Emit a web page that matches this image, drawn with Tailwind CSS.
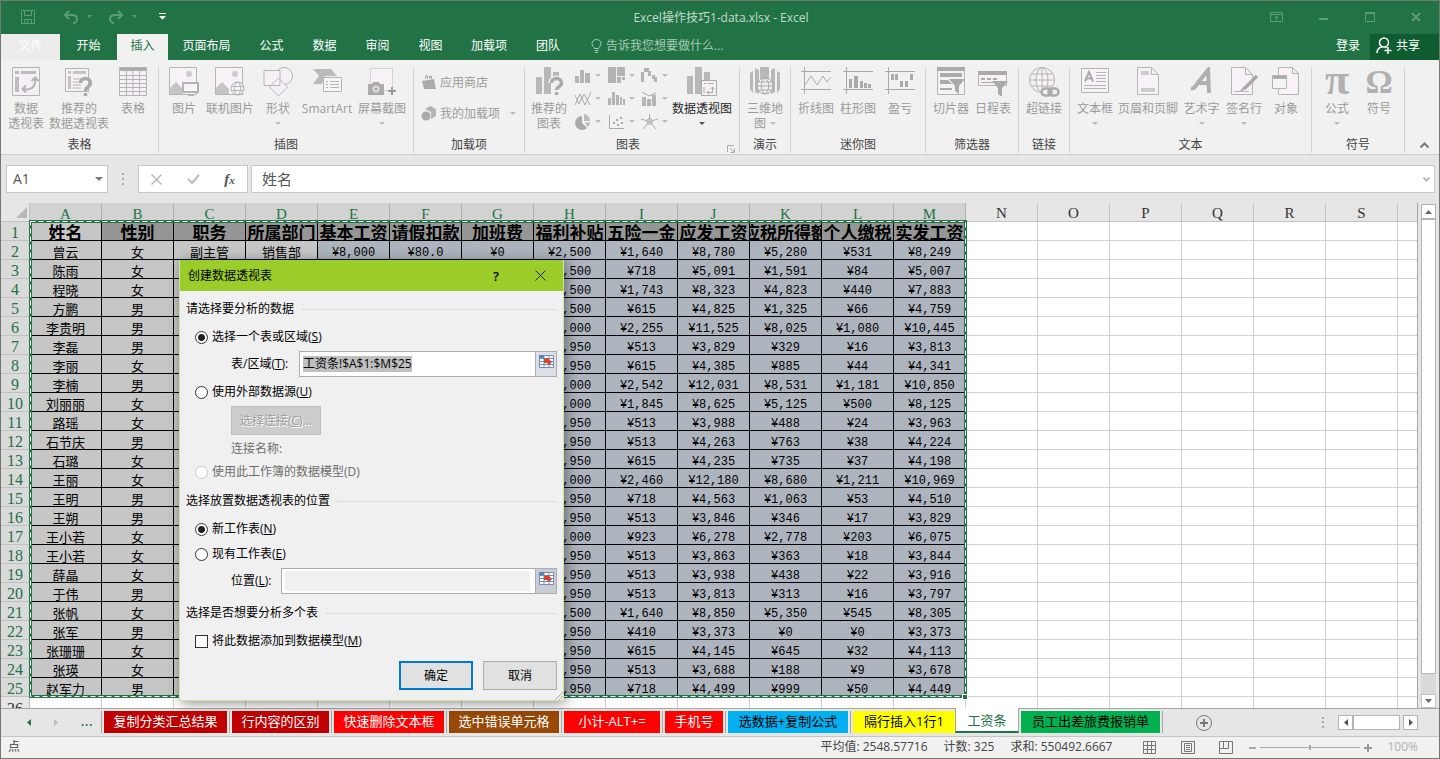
<!DOCTYPE html>
<html lang="zh-CN">
<head>
<meta charset="utf-8">
<title>Excel操作技巧1-data.xlsx - Excel</title>
<script src="https://cdn.jsdelivr.net/npm/@tailwindcss/browser@4"></script>
</head>
<body class="h-screen overflow-hidden font-['Open_Sans','Noto_Sans_CJK_SC',sans-serif] text-xs text-[#444]">
<div class="relative flex h-screen flex-col overflow-hidden border border-[#6f7a74] bg-[#e6e6e6]">

  <!-- Title bar -->
  <header class="flex h-[33px] shrink-0 items-center bg-[#217346] pb-[2px] text-[#5d9c7b]">
    <div class="flex flex-1 items-center pl-5">
      <button aria-label="保存"><svg class="size-[14px]" viewBox="0 0 14 14" fill="none" stroke="currentColor"><path d="M.5.5h13v13H.5zM3.500.5v5h7v-5M3.500 13.500v-4h7v4M6.500 10v3"/></svg></button>
      <button aria-label="撤消" class="ml-7 flex items-center gap-2"><svg class="h-[14px] w-[16px]" viewBox="0 0 16 14" fill="none" stroke="currentColor" stroke-width="2"><path d="M6 1L2 5l4 4M2 5h7c3 0 5 1.500 5 4s-2 4-4 4"/></svg><svg class="h-[3px] w-[5px]" viewBox="0 0 5 3" fill="currentColor"><path d="M0 0h5L2.500 3z"/></svg></button>
      <button aria-label="恢复" class="ml-4 flex items-center gap-2"><svg class="h-[14px] w-[16px]" viewBox="0 0 16 14" fill="none" stroke="currentColor" stroke-width="2"><path d="M10 1l4 4-4 4M14 5H7C4 5 2 6.500 2 9s2 4 4 4"/></svg><svg class="h-[3px] w-[5px]" viewBox="0 0 5 3" fill="currentColor"><path d="M0 0h5L2.500 3z"/></svg></button>
      <button aria-label="自定义快速访问工具栏" class="ml-[22px] text-white"><svg class="h-[7px] w-[7px]" viewBox="0 0 7 7" fill="currentColor"><path d="M0 0h7v1H0zM0 3h7L3.500 6.500z"/></svg></button>
    </div>
    <h1 class="pt-[2px] font-normal text-[#c4dbce]">Excel操作技巧1-data.xlsx - Excel</h1>
    <div class="flex flex-1 items-center justify-end gap-9 pr-[18px]">
      <button aria-label="功能区显示选项"><svg class="h-[10px] w-[13px]" viewBox="0 0 13 10" fill="none" stroke="currentColor"><path d="M.5.5h12v9H.5zM.5 2.500h12M6.500 8.500V4M4.500 6l2-2 2 2"/></svg></button>
      <button aria-label="最小化"><svg class="h-[10px] w-[10px]" viewBox="0 0 10 10" fill="currentColor"><path d="M0 6h9v2H0z"/></svg></button>
      <button aria-label="最大化"><svg class="h-[10px] w-[10px]" viewBox="0 0 10 10" fill="none" stroke="currentColor"><path d="M.5.5h9v9h-9zM0 1.500h10"/></svg></button>
      <button aria-label="关闭"><svg class="h-[10px] w-[10px]" viewBox="0 0 10 10" fill="none" stroke="currentColor" stroke-width="2"><path d="M1 1l8 8M9 1L1 9"/></svg></button>
    </div>
  </header>

  <!-- Ribbon tabs -->
  <nav class="flex h-[26px] shrink-0 items-stretch bg-[#217346] leading-[18px] text-white [&>button]:pb-[3px]">
    <button class="w-[59px] bg-[#ececec] text-white">文件</button>
    <button class="w-[57px]">开始</button>
    <button class="w-[51px] bg-[#f1f1f1] text-[#217346]">插入</button>
    <button class="w-[77px]">页面布局</button>
    <button class="w-[53px]">公式</button>
    <button class="w-[53px]">数据</button>
    <button class="w-[53px]">审阅</button>
    <button class="w-[53px]">视图</button>
    <button class="w-[64px]">加载项</button>
    <button class="w-[54px]">团队</button>
    <label class="ml-4 flex flex-1 items-center gap-1 pb-[2px] text-[#a9cbb8]">
      <svg class="h-[14px] w-[11px]" viewBox="0 0 11 14" fill="none" stroke="currentColor"><path d="M3.500 9.500C3.500 8 1 7 1 4.500a4.500 4 0 0 1 9 0C10 7 7.500 8 7.500 9.500zM3.500 11.500h4M4 13.500h3"/></svg>
      <input class="w-[160px] placeholder-[#a9cbb8] outline-none" aria-label="告诉我您想要做什么" placeholder="告诉我您想要做什么...">
    </label>
    <button class="w-11">登录</button>
    <button class="flex w-[69px] items-center gap-[3px] bg-[#0e5c2f] pl-[6px]"><svg class="size-[17px]" viewBox="0 0 17 17" fill="none" stroke="currentColor" stroke-width="1.500"><circle cx="8" cy="5.500" r="4.500"/><path d="M1 16c0-3.500 2-5.500 5-6M9 10l1.500 1M8.500 13.500h7M12 10v7"/></svg>共享</button>
  </nav>

  <!-- Ribbon -->
  <section class="flex h-[95px] shrink-0 border-b border-[#cdcdcd] bg-[#f1f1f1] leading-[15px] whitespace-nowrap text-[#9b9b9b]">
    <!-- 表格 -->
    <div class="flex w-[158px] shrink-0 flex-col pt-[7px]">
      <div class="flex h-[70px] border-r border-[#d4d4d4] pl-[1px]">
        <button class="flex w-12 flex-col items-center"><svg class="mb-[5px] h-[29px] w-[28px]" viewBox="0 0 28 29" fill="none" stroke="#b4b4b4"><path fill="#f6f0f6" d="M.5.5h27v28H.5z"/><path d="M3 4h4v3H3zM9 4h15v3H9zM3 10h4v15H3z" fill="#bcbcbc" stroke="none"/><path stroke-width="2" d="M11 22c9 2 13-3 12-11M19.500 14l3.500-3.500 3.500 3.500M14 18.500L10.500 22l3.500 3.500"/></svg>数据<br>透视表</button>
        <button class="flex w-[58px] flex-col items-center"><svg class="mb-[5px] h-[29px] w-[28px]" viewBox="0 0 28 29" fill="none" stroke="#b4b4b4"><path fill="#f6f0f6" d="M.5 1.500h23v23H.5z"/><path d="M3 4h3v3H3zM8 4h13v3H8zM3 9h3v13H3z" fill="#c4c4c4" stroke="none"/><path d="M8 12h10M8 15h8M8 18h8M8 21h8"/><path stroke-width="3.500" stroke="#aaa" d="M15.500 16c0-6 10-6 10 0 0 4-5 3.500-5 8M20.500 26v3"/></svg>推荐的<br>数据透视表</button>
        <button class="flex w-[50px] flex-col items-center"><svg class="mb-[5px] h-[29px] w-[28px]" viewBox="0 0 28 29" fill="none" stroke="#b4b4b4"><path fill="#f6f0f6" d="M.5 3.500h27v25H.5z"/><path fill="#aaa" d="M.5.5h27v3H.5z"/><path d="M.5 8.500h27M.5 12.500h27M.5 16.500h27M.5 20.500h27M.5 24.500h27M7.500 3v25M14 3v25M20.500 3v25"/></svg>表格</button>
      </div>
      <div class="h-[16px] border-r border-[#d4d4d4] text-center text-[#444]">表格</div>
    </div>
    <!-- 插图 -->
    <div class="flex w-[255px] shrink-0 flex-col pt-[7px]">
      <div class="flex h-[70px] border-r border-[#d4d4d4] pl-[3px]">
        <button class="flex w-11 flex-col items-center"><svg class="mb-[5px] h-[29px] w-[30px]" viewBox="0 0 30 29" fill="none" stroke="#b4b4b4"><path fill="#f8f2f8" d="M.5.5h27v27H.5z"/><circle cx="20" cy="7" r="3" fill="#ccc" stroke="none"/><path stroke="none" fill="#c4c4c4" d="M1 27V21l6-6 7 7v5z"/><path stroke-width="2" fill="#f5f5f5" d="M14 16h15v9H14z"/><path stroke-width="2" d="M19 28.500h6"/></svg>图片</button>
        <button class="flex w-12 flex-col items-center"><svg class="mb-[5px] h-[29px] w-[30px]" viewBox="0 0 30 29" fill="none" stroke="#b4b4b4"><path fill="#f8f2f8" d="M.5.500h27v27H.5z"/><circle cx="20" cy="7" r="3" fill="#ccc" stroke="none"/><path stroke="none" fill="#c4c4c4" d="M1 27V21l6-6 7 7v5z"/><circle cx="22.500" cy="21.500" r="6.500" fill="#f5f5f5"/><ellipse cx="22.500" cy="21.500" rx="3" ry="6.500"/><path d="M16 19.500h13M16 23.500h13"/></svg>联机图片</button>
        <button class="flex w-12 flex-col items-center"><svg class="mb-[5px] h-[29px] w-[30px]" viewBox="0 0 30 29" fill="#f6f0f6" stroke="#b4b4b4"><circle cx="21" cy="9" r="8.500"/><path d="M1 3.500h16v15H1zM15.500 11l9 9-9 9-9-9z"/></svg>形状<svg class="mt-[6px] h-[3px] w-[6px]" viewBox="0 0 6 3" fill="#bbb"><path d="M0 0h6L3 3z"/></svg></button>
        <button class="flex w-[50px] flex-col items-center"><svg class="mb-[5px] h-[29px] w-[32px]" viewBox="0 0 32 29" fill="none" stroke="#b4b4b4"><path fill="#bababa" stroke="none" d="M2 2h18l6 7H14l-3 8H2l6-8z"/><path fill="#f8f4f8" d="M12.500 10.500h18v14h-18z"/><path d="M15 14.500h2M19 14.500h9M15 17.500h2M19 17.500h9M15 20.500h2M19 20.500h9"/></svg>SmartArt</button>
        <button class="flex w-[60px] flex-col items-center"><svg class="mb-[5px] h-[29px] w-[28px]" viewBox="0 0 28 29" fill="none" stroke="#b4b4b4"><path fill="#f8f2f8" stroke-dasharray="1 1" d="M2.500 1.500h22v22h-22z"/><path fill="#aaa" stroke="none" d="M0 17h4l1-2h6l1 2h4v11H0z"/><circle cx="8" cy="22" r="3.500" fill="#ddd" stroke="none"/><circle cx="8" cy="22" r="1.500" fill="#aaa" stroke="none"/><path stroke="#999" stroke-width="2" d="M20 24h8M24 20v8"/></svg>屏幕截图<svg class="mt-[6px] h-[3px] w-[6px]" viewBox="0 0 6 3" fill="#bbb"><path d="M0 0h6L3 3z"/></svg></button>
      </div>
      <div class="h-[16px] border-r border-[#d4d4d4] text-center text-[#444]">插图</div>
    </div>
    <!-- 加载项 -->
    <div class="flex w-[111px] shrink-0 flex-col pt-[7px]">
      <div class="flex h-[70px] flex-col gap-[15px] border-r border-[#d4d4d4] pt-[7px] pl-[7px]">
        <button class="flex items-center gap-[3px]"><svg class="h-[16px] w-[16px]" viewBox="0 0 16 16" fill="#aaa"><path d="M1 7l12-2 2 10H3zM4 6V2l3-1v4H6V2zM8 5V2h3v3h-1V3z"/></svg>应用商店</button>
        <button class="flex items-center gap-[3px]"><svg class="h-[16px] w-[16px]" viewBox="0 0 16 16" fill="#aaa"><circle cx="5" cy="11" r="4.500"/><path d="M4 4l5-3 6 3v7l-5 3V7z" fill="#b4b4b4"/></svg>我的加载项<svg class="ml-[7px] h-[3px] w-[6px]" viewBox="0 0 6 3" fill="#bbb"><path d="M0 0h6L3 3z"/></svg></button>
      </div>
      <div class="h-[16px] border-r border-[#d4d4d4] text-center text-[#444]">加载项</div>
    </div>
    <!-- 图表 -->
    <div class="flex w-[215px] shrink-0 flex-col pt-[7px]">
      <div class="flex h-[70px] border-r border-[#d4d4d4]">
        <button class="flex w-12 flex-col items-center"><svg class="mb-[5px] ml-[2px] h-[29px] w-[28px]" viewBox="0 0 28 29" fill="#b8b8b8"><path d="M0 10h6v17H0zM8 0h7v27H8zM17 5h6v8h-6z"/><path fill="none" stroke="#f1f1f1" stroke-width="6" d="M15.500 16c0-6 10-6 10 0 0 4-5 3.500-5 8"/><path fill="none" stroke="#aaa" stroke-width="3.500" d="M15.500 16c0-6 10-6 10 0 0 4-5 3.500-5 7M20.500 25v3"/></svg>推荐的<br>图表</button>
        <div class="grid grid-cols-3 content-start gap-x-[6px] gap-y-[6px] pl-[2px]">
          <button class="flex items-center gap-1" aria-label="柱形图"><svg class="size-[16px]" viewBox="0 0 16 16" fill="#b4b4b4"><path d="M0 8h4v7H0zM5 2h4v13H5zM10 5h5v10h-5z"/></svg><svg class="h-[3px] w-[6px]" viewBox="0 0 6 3" fill="#bbb"><path d="M0 0h6L3 3z"/></svg></button>
          <button class="flex items-center gap-1" aria-label="层次结构图"><svg class="size-[17px]" viewBox="0 0 17 17" fill="#b4b4b4"><path d="M0 0h8v16H0zM9 0h8v9H9zM9 10h4v6H9zM14 10h3v3h-3z"/></svg><svg class="h-[3px] w-[6px]" viewBox="0 0 6 3" fill="#bbb"><path d="M0 0h6L3 3z"/></svg></button>
          <button class="flex items-center gap-1" aria-label="瀑布图"><svg class="size-[17px]" viewBox="0 0 17 17" fill="#b4b4b4"><path d="M0 5h3v10H0zM3 1h5v4H3zM7 4h3v5H7zM11 8h3v4h-3zM13 10h3v5h-3z"/></svg><svg class="h-[3px] w-[6px]" viewBox="0 0 6 3" fill="#bbb"><path d="M0 0h6L3 3z"/></svg></button>
          <button class="flex items-center gap-1" aria-label="折线图"><svg class="size-[16px]" viewBox="0 0 16 16" fill="none" stroke="#aaa"><path d="M0 14L5 3l5 11 6-13M0 4l4 9 5-10 6 11"/></svg><svg class="h-[3px] w-[6px]" viewBox="0 0 6 3" fill="#bbb"><path d="M0 0h6L3 3z"/></svg></button>
          <button class="flex items-center gap-1" aria-label="统计图"><svg class="size-[17px]" viewBox="0 0 17 17" fill="#b4b4b4"><path d="M0 8h3v7H0zM4 2h3v13H4zM8 5h3v10H8zM12 7h2v8h-2zM15 9h2v6h-2z"/></svg><svg class="h-[3px] w-[6px]" viewBox="0 0 6 3" fill="#bbb"><path d="M0 0h6L3 3z"/></svg></button>
          <button class="flex items-center gap-1" aria-label="组合图"><svg class="size-[17px]" viewBox="0 0 17 17" fill="#b4b4b4"><path d="M1 7h4v9H1zM6 9h4v7H6zM11 5h4v11h-4z"/><path d="M1 2l7 4 7-3" stroke="#aaa" fill="none"/></svg><svg class="h-[3px] w-[6px]" viewBox="0 0 6 3" fill="#bbb"><path d="M0 0h6L3 3z"/></svg></button>
          <button class="flex items-center gap-1" aria-label="饼图"><svg class="size-[16px]" viewBox="0 0 16 16" fill="#aaa"><path d="M7 2v7l5 5a7 7 0 1 1-5-12z"/><path d="M9 0a7 7 0 0 1 6 7H9zM9.500 8.500H15a7 7 0 0 1-2 4.500z" fill="#bbb"/></svg><svg class="h-[3px] w-[6px]" viewBox="0 0 6 3" fill="#bbb"><path d="M0 0h6L3 3z"/></svg></button>
          <button class="flex items-center gap-1" aria-label="散点图"><svg class="size-[17px]" viewBox="0 0 17 17" fill="#aaa"><path d="M1 2h1v13h14v1H1zM5 9h2v2H5zM8 6h2v2H8zM9 11h2v2H9zM12 4h2v2h-2zM13 9h2v2h-2z"/></svg><svg class="h-[3px] w-[6px]" viewBox="0 0 6 3" fill="#bbb"><path d="M0 0h6L3 3z"/></svg></button>
          <button class="flex items-center gap-1" aria-label="雷达图"><svg class="size-[17px]" viewBox="0 0 17 17" fill="none" stroke="#aaa"><path d="M8.500 1v7.500M0 6l8.500 2.500L17 6M2 16l6.500-7.500L15 16M8.500 5l-3 2.500 1 3.500h4l1-3.500z"/></svg><svg class="h-[3px] w-[6px]" viewBox="0 0 6 3" fill="#bbb"><path d="M0 0h6L3 3z"/></svg></button>
        </div>
        <button class="ml-[3px] flex w-[62px] flex-col items-center text-[#262626]"><svg class="mb-[5px] h-[29px] w-[30px]" viewBox="0 0 30 29" fill="#b8b8b8"><path d="M0 9h6v18H0zM8 0h7v27H8zM17 5h6v8h-6z"/><path fill="#f6f0f0" stroke="#aaa" d="M14.500 13.500h15v15h-15z"/><path fill="none" stroke="#aaa" d="M17 16.500h2M21 16.500h6M17 20v6M20 25.500h5.500V20M23.500 22l2-2 2 2M22 23.500l-2 2 2 2"/></svg>数据透视图<svg class="mt-[6px] h-[3px] w-[6px]" viewBox="0 0 6 3" fill="#555"><path d="M0 0h6L3 3z"/></svg></button>
      </div>
      <div class="flex h-[16px] border-r border-[#d4d4d4] text-[#444]"><span class="flex-1 pr-0 pl-1 text-center">图表</span><button class="self-end pr-1" aria-label="图表对话框"><svg class="size-[8px]" viewBox="0 0 8 8" fill="none" stroke="#aaa"><path d="M.5 7V.5H7M3 3l4 4M7.500 3.500v4h-4"/></svg></button></div>
    </div>
    <!-- 演示 -->
    <div class="flex w-[51px] shrink-0 flex-col pt-[7px]">
      <div class="flex h-[70px] justify-center border-r border-[#d4d4d4]">
        <button class="flex w-12 flex-col items-center"><svg class="mb-[5px] h-[29px] w-[30px]" viewBox="0 0 30 29" fill="#b8b8b8"><path d="M0 6l3-2v22l-3-4zM5 1l4 2v24l-4-2zM10 0h9v12h-9zM21 3l4-2v24l-4 2zM27 4l3 2v16l-3 4z"/><circle cx="15" cy="19" r="8" fill="#f1f1f1" stroke="#aaa"/><path fill="none" stroke="#aaa" d="M7 19h16M8.500 15h13M8.500 23h13M15 11c-5 4-5 12 0 16 5-4 5-12 0-16"/></svg>三维地<span class="flex items-center gap-1">图<svg class="h-[3px] w-[6px]" viewBox="0 0 6 3" fill="#bbb"><path d="M0 0h6L3 3z"/></svg></span></button>
      </div>
      <div class="h-[16px] border-r border-[#d4d4d4] text-center text-[#444]">演示</div>
    </div>
    <!-- 迷你图 -->
    <div class="flex w-[135px] shrink-0 flex-col pt-[7px]">
      <div class="flex h-[70px] justify-center border-r border-[#d4d4d4]">
        <button class="flex w-[42px] flex-col items-center"><svg class="mb-[5px] h-[29px] w-[30px]" viewBox="0 0 30 29" fill="none" stroke="#aaa"><path d="M0 4.500h30M0 22.500h30M3.500 0v27"/><path d="M4 18l6-9 6 9 6-9 4 6 4-5"/></svg>折线图</button>
        <button class="flex w-[42px] flex-col items-center"><svg class="mb-[5px] h-[29px] w-[30px]" viewBox="0 0 30 29" fill="none" stroke="#aaa"><path d="M0 4.500h30M0 22.500h30M3.500 0v27"/><path stroke="none" fill="#aaa" d="M6 12h3v9H6zM11 9h4v12h-4zM17 14h3v7h-3zM21 16h3v5h-3zM25 17h3v4h-3z"/></svg>柱形图</button>
        <button class="flex w-[42px] flex-col items-center"><svg class="mb-[5px] h-[29px] w-[30px]" viewBox="0 0 30 29" fill="none" stroke="#aaa"><path d="M0 4.500h30M0 22.500h30M3.500 0v27"/><path stroke="none" fill="#aaa" d="M6 7h3v6H6zM10 7h3v6h-3zM15 14h3v6h-3zM20 14h3v6h-3zM25 7h3v6h-3z"/></svg>盈亏</button>
      </div>
      <div class="h-[16px] border-r border-[#d4d4d4] text-center text-[#444]">迷你图</div>
    </div>
    <!-- 筛选器 -->
    <div class="flex w-[93px] shrink-0 flex-col pt-[7px]">
      <div class="flex h-[70px] justify-center border-r border-[#d4d4d4]">
        <button class="flex w-[42px] flex-col items-center"><svg class="mb-[5px] h-[29px] w-[28px]" viewBox="0 0 28 29" fill="#aaa"><path fill="#f5f1f5" stroke="#b4b4b4" d="M.5.500h27v27H.5z"/><path d="M0 0h28v4H0zM3 6h22v4H3zM3 13h8l4 4H3zM3 21h12v2H3zM12 12h16l-6 7v8l-4-3v-5z"/></svg>切片器</button>
        <button class="flex w-[42px] flex-col items-center"><svg class="mb-[5px] h-[29px] w-[30px]" viewBox="0 0 30 29" fill="#aaa"><path fill="#f5f1f5" stroke="#b4b4b4" d="M.5 4.500h28v14H.5z"/><path d="M0 4h29v4H0zM3 11h4v2H3zM9 11h4v2H9zM15 11h4v2h-4zM3 15h12v1H3zM14 14h16l-6 7v9l-4-3v-6z"/></svg>日程表</button>
      </div>
      <div class="h-[16px] border-r border-[#d4d4d4] text-center text-[#444]">筛选器</div>
    </div>
    <!-- 链接 -->
    <div class="flex w-[51px] shrink-0 flex-col pt-[7px]">
      <div class="flex h-[70px] justify-center border-r border-[#d4d4d4]">
        <button class="flex w-12 flex-col items-center"><svg class="mb-[4px] h-[30px] w-[31px]" viewBox="0 0 31 30" fill="none" stroke="#b4b4b4"><circle cx="13" cy="13" r="12.500" fill="#f5f1f5"/><ellipse cx="13" cy="13" rx="6" ry="12.500"/><path d="M.5 13h25M13 .5v25M2.500 7h21M2.500 19h21"/><path stroke="#f1f1f1" stroke-width="5" d="M12 25h18"/><rect x="12.500" y="21.500" width="10" height="7" rx="3.500" stroke="#aaa" stroke-width="2.500"/><rect x="19.500" y="21.500" width="10" height="7" rx="3.500" stroke="#aaa" stroke-width="2.500"/></svg>超链接</button>
      </div>
      <div class="h-[16px] border-r border-[#d4d4d4] text-center text-[#444]">链接</div>
    </div>
    <!-- 文本 -->
    <div class="flex w-[242px] shrink-0 flex-col pt-[7px]">
      <div class="flex h-[70px] justify-center border-r border-[#d4d4d4]">
        <button class="flex w-[42px] flex-col items-center"><svg class="mb-[5px] h-[29px] w-[28px]" viewBox="0 0 28 29" fill="none" stroke="#b4b4b4"><path fill="#f8f2f8" d="M.5 1.500h27v24H.5z"/><path stroke="#aaa" stroke-width="2" d="M4 14.500L8 5l4 9.500M5.500 11.500h5"/><path d="M15 5.500h10M15 8.500h10M15 11.500h10M15 14.500h10M3 18.500h22M3 21.500h22"/></svg>文本框<svg class="mt-[6px] h-[3px] w-[6px]" viewBox="0 0 6 3" fill="#bbb"><path d="M0 0h6L3 3z"/></svg></button>
        <button class="flex w-16 flex-col items-center"><svg class="mb-[5px] h-[29px] w-[22px]" viewBox="0 0 22 29" fill="none" stroke="#b4b4b4"><path fill="#f8f2f8" d="M.5.5h14l7 7v20H.5zM14.500.5v7h7"/><path fill="#ccc" stroke="none" d="M4 4h8v4H4zM4 21h14v4H4z"/></svg>页眉和页脚</button>
        <button class="flex w-[43px] flex-col items-center"><svg class="mb-[5px] h-[29px] w-[24px]" viewBox="0 0 24 29" fill="none" stroke="#b0b0b0" stroke-width="4"><path d="M1 21c3 1 4-1 6-4L18 3l1 23M7 16h12"/></svg>艺术字<svg class="mt-[6px] h-[3px] w-[6px]" viewBox="0 0 6 3" fill="#bbb"><path d="M0 0h6L3 3z"/></svg></button>
        <button class="flex w-[42px] flex-col items-center"><svg class="mb-[5px] h-[29px] w-[27px]" viewBox="0 0 27 29" fill="none" stroke="#b4b4b4"><path fill="#f8f2f8" d="M.5.5h14l7 7v20H.5zM14.500.5v7h7M3 24.500h15"/><path stroke="#aaa" stroke-width="3.500" d="M26 9L13 22"/><path stroke="#aaa" stroke-width="2" d="M13 21l-3 3"/></svg>签名行<svg class="mt-[6px] h-[3px] w-[6px]" viewBox="0 0 6 3" fill="#bbb"><path d="M0 0h6L3 3z"/></svg></button>
        <button class="flex w-[42px] flex-col items-center"><svg class="mb-[5px] h-[29px] w-[28px]" viewBox="0 0 28 29" fill="none" stroke="#b4b4b4"><path fill="#f8f2f8" d="M6.500.5h14l6 6v21h-20zM20.500.5v6h6"/><path fill="#f5f5f5" d="M.5 9.500h14v12H.5z"/><path fill="#aaa" d="M.5 8.500h14v3H.5z"/></svg>对象</button>
      </div>
      <div class="h-[16px] border-r border-[#d4d4d4] text-center text-[#444]">文本</div>
    </div>
    <!-- 符号 -->
    <div class="flex w-[93px] shrink-0 flex-col pt-[7px]">
      <div class="flex h-[70px] justify-center border-r border-[#d4d4d4]">
        <button class="flex w-[42px] flex-col items-center"><span class="mb-[5px] h-[29px] font-['Liberation_Serif',serif] text-[44px] leading-[26px] font-bold text-[#b0b0b0]" aria-hidden="true">π</span>公式<svg class="mt-[6px] h-[3px] w-[6px]" viewBox="0 0 6 3" fill="#bbb"><path d="M0 0h6L3 3z"/></svg></button>
        <button class="flex w-[42px] flex-col items-center"><span class="mb-[5px] h-[29px] font-['Liberation_Serif',serif] text-[34px] leading-[30px] font-bold text-[#b0b0b0]" aria-hidden="true">Ω</span>符号</button>
      </div>
      <div class="h-[16px] border-r border-[#d4d4d4] text-center text-[#444]">符号</div>
    </div>
    <div class="flex flex-1 items-end justify-end pr-[10px] pb-[6px]"><button aria-label="折叠功能区"><svg class="h-[6px] w-[9px]" viewBox="0 0 9 6" fill="none" stroke="#777" stroke-width="2"><path d="M.5 5.500l4-4 4 4"/></svg></button></div>
  </section>

  <!-- Formula bar -->
  <section class="flex h-[48px] shrink-0 items-start pt-[10px] pr-1 pl-[5px]">
    <div class="flex h-[28px] w-[102px] items-center border border-[#c8c8c8] bg-white pr-1">
      <input class="w-full min-w-0 flex-1 pl-[6px] text-sm leading-[20px] text-[#555] outline-none" aria-label="名称框" value="A1">
      <button aria-label="名称列表"><svg class="h-[4px] w-[8px]" viewBox="0 0 8 4" fill="#777"><path d="M0 0h8L4 4z"/></svg></button>
    </div>
    <svg class="mx-[14px] mt-2 h-[12px] w-[2px]" viewBox="0 0 2 12" fill="#aaa"><path d="M0 0h2v2H0zM0 5h2v2H0zM0 10h2v2H0z"/></svg>
    <div class="flex h-[28px] w-[110px] items-center justify-around border border-[#c8c8c8] bg-white">
      <button aria-label="取消输入"><svg class="size-[11px]" viewBox="0 0 11 11" fill="none" stroke="#bbb" stroke-width="1.500"><path d="M.5.5l10 10M10.500.5l-10 10"/></svg></button>
      <button aria-label="输入"><svg class="h-[10px] w-[13px]" viewBox="0 0 13 10" fill="none" stroke="#bbb" stroke-width="2"><path d="M1 5l4 4 7-8"/></svg></button>
      <button aria-label="插入函数" class="font-['Liberation_Serif',serif] text-[15px] leading-[20px] font-bold text-[#555] italic">f<span class="text-[11px]">x</span></button>
    </div>
    <div class="ml-[3px] flex h-[28px] flex-1 items-center border border-[#c8c8c8] bg-white pr-1">
      <input class="min-w-0 flex-1 pl-[10px] text-[15px] leading-[22px] text-[#555] outline-none" aria-label="编辑栏" value="姓名">
      <button aria-label="展开编辑栏"><svg class="h-[5px] w-[7px]" viewBox="0 0 7 5" fill="none" stroke="#bbb" stroke-width="2"><path d="M.5.5l3 3 3-3"/></svg></button>
    </div>
  </section>

  <!-- Sheet -->
  <main class="flex min-h-0 flex-1">
    <div class="relative min-w-0 flex-1 overflow-hidden border-r border-[#a6a6a6]">
      <table class="w-[1469px] table-fixed border-separate border-spacing-0 text-center text-black">
        <colgroup id="cols"><col class="w-[29px]"></colgroup>
        <thead><tr id="letters"><td class="h-[19px] border-r border-b border-[#c4c4c4] p-0"><svg class="ml-[15px] size-[11px]" viewBox="0 0 11 11" fill="#b8b8b8"><path d="M11 0v11H0z"/></svg></td></tr></thead>
        <tbody id="rows"></tbody>
      </table>
      <svg class="pointer-events-none absolute top-[17px] left-[26px] h-[480px] w-[941px]" viewBox="0 0 941 480" fill="none"><rect x="3.500" y="1.500" width="935" height="475" stroke="#217346" stroke-width="3"/><rect x="3.500" y="1.500" width="935" height="475" stroke="#fff" stroke-width="1" stroke-dasharray="5 3"/><path fill="#217346" stroke="#fff" d="M935.500 474.500h5v5h-5z"/></svg>
    </div>
    <div class="flex w-[21px] shrink-0 flex-col items-center pt-px pr-[1px]">
      <button class="flex h-[15px] w-[15px] shrink-0 items-center justify-center border border-[#b4b4b4] bg-white" aria-label="向上滚动"><svg class="h-[4px] w-[7px]" viewBox="0 0 7 4" fill="#666"><path d="M0 4h7L3.500 0z"/></svg></button>
      <div class="w-[15px] flex-1 bg-[#d9d9d9] pb-5"><div class="h-full border border-[#b4b4b4] bg-white"></div></div>
      <button class="flex h-[14px] w-[15px] shrink-0 items-center justify-center border border-[#c4c4c4] bg-white" aria-label="向下滚动"><svg class="h-[4px] w-[7px]" viewBox="0 0 7 4" fill="#666"><path d="M0 0h7L3.500 4z"/></svg></button>
    </div>
  </main>

  <!-- Sheet tabs -->
  <nav class="flex h-[28px] shrink-0 border-t border-[#a6a6a6] text-[13px] leading-[18px] whitespace-nowrap text-white">
    <div class="flex w-[100px] items-center justify-between pr-2 pl-[26px] text-[#217346]">
      <button aria-label="上一张"><svg class="h-[7px] w-[4px]" viewBox="0 0 4 7" fill="#217346"><path d="M4 0v7L0 3.500z"/></svg></button>
      <button aria-label="下一张"><svg class="h-[7px] w-[4px]" viewBox="0 0 4 7" fill="#bbb"><path d="M0 0v7l4-3.500z"/></svg></button>
      <button class="pb-[6px] text-base leading-[18px]">...</button>
    </div>
    <div class="flex pt-[2px] pb-[3px] [&_button]:pb-[2px]">
      <div class="border-x border-[#a6a6a6] px-[2px]"><button class="h-full w-[123px] bg-[#c00000]">复制分类汇总结果</button></div>
      <div class="border-r border-[#a6a6a6] px-[2px]"><button class="h-full w-[97px] bg-[#c00000]">行内容的区别</button></div>
      <div class="border-r border-[#a6a6a6] px-[2px]"><button class="h-full w-[110px] bg-[#ff0000]">快速删除文本框</button></div>
      <div class="border-r border-[#a6a6a6] px-[2px]"><button class="h-full w-[110px] bg-[#984807]">选中错误单元格</button></div>
      <div class="border-r border-[#a6a6a6] px-[2px]"><button class="h-full w-[96px] bg-[#ff0000]">小计-ALT+=</button></div>
      <div class="border-r border-[#a6a6a6] px-[2px]"><button class="h-full w-[58px] bg-[#ff0000]">手机号</button></div>
      <div class="border-r border-[#a6a6a6] px-[2px]"><button class="h-full w-[120px] bg-[#00b0f0] text-black">选数据+复制公式</button></div>
      <div class="pl-[2px]"><button class="h-full w-[102px] bg-[#ffff00] text-black">隔行插入1行1</button></div>
    </div>
    <button class="-mt-px mb-[3px] w-[64px] border-x border-b-2 border-x-[#a6a6a6] border-b-[#217346] bg-white text-[#217346]">工资条</button>
    <div class="flex pt-[2px] pb-[3px] [&_button]:pb-[2px]">
      <div class="border-r border-[#a6a6a6] px-[2px]"><button class="h-full w-[139px] bg-[#00b050] text-black">员工出差旅费报销单</button></div>
    </div>
    <button class="ml-[33px]" aria-label="新工作表"><svg class="size-[16px]" viewBox="0 0 16 16" fill="none" stroke="#777"><circle cx="8" cy="8" r="7.500"/><path stroke-width="2" d="M4 8h8M8 4v8"/></svg></button>
    <div class="flex flex-1 items-center justify-end pr-[21px]">
      <svg class="mr-[14px] h-[11px] w-[2px]" viewBox="0 0 2 11" fill="#aaa"><path d="M0 0h2v2H0zM0 4h2v2H0zM0 9h2v2H0z"/></svg>
      <button class="flex size-[15px] items-center justify-center border border-[#b4b4b4] bg-white" aria-label="向左滚动"><svg class="h-[7px] w-[4px]" viewBox="0 0 4 7" fill="#555"><path d="M4 0v7L0 3.500z"/></svg></button>
      <div class="mr-[3px] h-[15px] w-[47px] border border-[#b4b4b4] bg-white"></div>
      <button class="flex size-[15px] items-center justify-center border border-[#b4b4b4] bg-white" aria-label="向右滚动"><svg class="h-[7px] w-[4px]" viewBox="0 0 4 7" fill="#555"><path d="M0 0v7l4-3.500z"/></svg></button>
    </div>
  </nav>

  <!-- Status bar -->
  <footer class="flex h-[22px] shrink-0 items-center border-t border-[#c4c4c4] bg-[#f1f1f1] pr-[21px] pb-[2px] pl-[7px] leading-[18px]">
    <span class="flex-1">点</span>
    <span class="flex gap-4"><span>平均值: 2548.57716</span><span>计数: 325</span><span>求和: 550492.6667</span></span>
    <span class="ml-[31px] flex gap-[24px] pt-[2px]">
      <button aria-label="普通"><svg class="h-[13px] w-[14px]" viewBox="0 0 14 13" fill="none" stroke="#777"><path d="M.5.5h12v12H.5zM4.500.5v12M8.500.5v12M.5 4.500h12M.5 8.500h12"/></svg></button>
      <button aria-label="页面布局"><svg class="h-[13px] w-[14px]" viewBox="0 0 14 13" fill="none" stroke="#777"><path d="M.5.5h13v12H.5zM3.500 2.500h7v8h-7zM5 4.500h4M5 6.500h4M5 8.500h4"/></svg></button>
      <button aria-label="分页预览"><svg class="h-[13px] w-[14px]" viewBox="0 0 14 13" fill="none" stroke="#777"><path d="M.5.5h13v12H.5zM4.500.5v7h5v-7M4.500 7.500h-4"/></svg></button>
    </span>
    <span class="ml-4 flex items-center gap-1 pt-[2px] text-[#aaa]">
      <button aria-label="缩小"><svg class="h-[8px] w-[7px]" viewBox="0 0 7 8" fill="#aaa"><path d="M0 3h7v2H0z"/></svg></button>
      <svg class="h-[7px] w-[100px]" viewBox="0 0 100 7" fill="#aaa"><path d="M0 3h100v1H0zM49 1h2v5h-2z"/></svg>
      <button aria-label="放大"><svg class="size-[8px]" viewBox="0 0 8 8" fill="#999"><path d="M0 3h8v2H0zM3 0h2v8H3z"/></svg></button>
    </span>
    <span class="ml-[15px] text-[#b0b0b0]">100%</span>
  </footer>

  <!-- Create PivotTable dialog -->
  <form role="dialog" aria-label="创建数据透视表" class="absolute top-[259px] left-[178px] flex w-[385px] flex-col border-r border-b border-l border-[#cfe5a5] bg-[#f0f0f0] leading-[16px] text-black shadow-[2px_2px_12px_rgba(0,0,0,0.45)]">
    <div class="flex h-[31px] items-center bg-[#9acd29] pr-[17px] pl-2">
      <h2 class="flex-1 font-normal">创建数据透视表</h2>
      <button type="button" class="mr-9 text-[13px] font-semibold" aria-label="帮助">?</button>
      <button type="button" aria-label="关闭"><svg class="size-[11px]" viewBox="0 0 11 11" fill="none" stroke="#222"><path d="M.5.5l10 10M10.500.5l-10 10"/></svg></button>
    </div>
    <div class="flex flex-col pr-[6px] pb-[10px] pl-[6px]">
      <div class="mt-[10px] flex items-center gap-[7px]">请选择要分析的数据<span class="h-px flex-1 bg-[#dcdcdc]"></span></div>
      <label class="mt-3 ml-[9px] flex items-center gap-1"><input type="radio" name="src" checked class="size-[13px] appearance-none rounded-full border border-[#333] bg-white checked:bg-[radial-gradient(circle,#222_0_3px,#fff_4px)]"><span>选择一个表或区域(<u>S</u>)</span></label>
      <div class="mt-[6px] ml-[45px] flex items-center">
        <label for="range" class="w-[68px]">表/区域(<u>T</u>):</label>
        <div class="flex h-[26px] flex-1 border border-[#abadb3] bg-white">
          <input id="range" class="min-w-0 flex-1 pl-[3px] outline-none selection:bg-[#c0c0c0] selection:text-black" value="工资条!$A$1:$M$25">
          <button type="button" class="flex w-[21px] items-start justify-center border-l border-[#abadb3] bg-[#dcdfe4] pt-[3px]" aria-label="选取区域"><svg class="h-[13px] w-[15px]" viewBox="0 0 15 13"><path fill="#fff" stroke="#6f8fc0" d="M.5.5h14v12H.5zM.5 3.500h14M.5 6.500h14M.5 9.500h14M5 1v11M10 1v11"/><path fill="#5a82bd" d="M0 0h5v3H0z"/><path fill="#d8442a" d="M5 4l4-1 4 4-3 3-2-2-3 0z"/></svg></button>
        </div>
      </div>
      <label class="mt-[7px] ml-[9px] flex items-center gap-1"><input type="radio" name="src" class="size-[13px] appearance-none rounded-full border border-[#333] bg-white"><span>使用外部数据源(<u>U</u>)</span></label>
      <button type="button" disabled class="mt-[6px] ml-[45px] h-[29px] w-[90px] border border-[#bfbfbf] bg-[#cccccc] text-[#9d9d9d] [text-shadow:1px_1px_0_#fff]">选择连接(<u>C</u>)...</button>
      <span class="mt-[6px] ml-[45px] text-[#6d6d6d]">连接名称:</span>
      <label class="mt-[7px] ml-[9px] flex items-center gap-1 text-[#6d6d6d]"><input type="radio" name="src" disabled class="size-[13px] appearance-none rounded-full border border-[#ccc] bg-white"><span>使用此工作簿的数据模型(D)</span></label>
      <div class="mt-[13px] flex items-center gap-[7px]">选择放置数据透视表的位置<span class="h-px flex-1 bg-[#dcdcdc]"></span></div>
      <label class="mt-3 ml-[9px] flex items-center gap-1"><input type="radio" name="dest" checked class="size-[13px] appearance-none rounded-full border border-[#333] bg-white checked:bg-[radial-gradient(circle,#222_0_3px,#fff_4px)]"><span>新工作表(<u>N</u>)</span></label>
      <label class="mt-[9px] ml-[9px] flex items-center gap-1"><input type="radio" name="dest" class="size-[13px] appearance-none rounded-full border border-[#333] bg-white"><span>现有工作表(<u>E</u>)</span></label>
      <div class="mt-[6px] ml-[45px] flex items-center">
        <label for="loc" class="w-[50px]">位置(<u>L</u>):</label>
        <div class="flex h-[26px] flex-1 border border-[#abadb3] bg-white">
          <input id="loc" class="my-[2px] mr-[5px] ml-[3px] min-w-0 flex-1 bg-[#f0f0f0] outline-none" value="">
          <button type="button" class="flex w-[21px] items-start justify-center border-l border-[#abadb3] bg-[#c9ccd2] pt-[3px]" aria-label="选取位置"><svg class="h-[13px] w-[15px]" viewBox="0 0 15 13"><path fill="#fff" stroke="#6f8fc0" d="M.5.5h14v12H.5zM.5 3.500h14M.5 6.500h14M.5 9.500h14M5 1v11M10 1v11"/><path fill="#5a82bd" d="M0 0h5v3H0z"/><path fill="#d8442a" d="M5 4l4-1 4 4-3 3-2-2-3 0z"/></svg></button>
        </div>
      </div>
      <div class="mt-[11px] flex items-center gap-[7px]">选择是否想要分析多个表<span class="h-px flex-1 bg-[#dcdcdc]"></span></div>
      <label class="mt-3 ml-[9px] flex items-center gap-1"><input type="checkbox" class="size-[13px] appearance-none border border-[#333] bg-white checked:bg-[#217346]"><span>将此数据添加到数据模型(<u>M</u>)</span></label>
      <div class="mt-3 flex justify-end gap-[10px]">
        <button type="button" class="h-[29px] w-[74px] border-2 border-[#0078d7] bg-[#e1e1e1]">确定</button>
        <button type="button" class="h-[29px] w-[74px] border border-[#adadad] bg-[#e1e1e1]">取消</button>
      </div>
    </div>
    <svg class="absolute right-0 bottom-0 size-[9px]" viewBox="0 0 9 9" stroke="#aaa"><path d="M1 9l8-8M5 9l4-4"/></svg>
  </form>
</div>

<script>
// Salary sheet: name, sex, post, department, base, leave, overtime, H..M
const data = [
  ['曾云','女','副主管','销售部','¥8,000','¥80.0','¥0','¥2,500','¥1,640','¥8,780','¥5,280','¥531','¥8,249'],
  ['陈雨','女','','','','','','¥1,500','¥718','¥5,091','¥1,591','¥84','¥5,007'],
  ['程晓','女','','','','','','¥2,500','¥1,743','¥8,323','¥4,823','¥440','¥7,883'],
  ['方鹏','男','','','','','','¥1,500','¥615','¥4,825','¥1,325','¥66','¥4,759'],
  ['李贵明','男','','','','','','¥3,000','¥2,255','¥11,525','¥8,025','¥1,080','¥10,445'],
  ['李磊','男','','','','','','¥1,950','¥513','¥3,829','¥329','¥16','¥3,813'],
  ['李丽','女','','','','','','¥1,950','¥615','¥4,385','¥885','¥44','¥4,341'],
  ['李楠','男','','','','','','¥3,000','¥2,542','¥12,031','¥8,531','¥1,181','¥10,850'],
  ['刘丽丽','女','','','','','','¥2,000','¥1,845','¥8,625','¥5,125','¥500','¥8,125'],
  ['路瑶','女','','','','','','¥1,950','¥513','¥3,988','¥488','¥24','¥3,963'],
  ['石节庆','男','','','','','','¥1,950','¥513','¥4,263','¥763','¥38','¥4,224'],
  ['石璐','女','','','','','','¥1,950','¥615','¥4,235','¥735','¥37','¥4,198'],
  ['王丽','女','','','','','','¥3,000','¥2,460','¥12,180','¥8,680','¥1,211','¥10,969'],
  ['王明','男','','','','','','¥1,950','¥718','¥4,563','¥1,063','¥53','¥4,510'],
  ['王朔','男','','','','','','¥1,950','¥513','¥3,846','¥346','¥17','¥3,829'],
  ['王小若','女','','','','','','¥2,000','¥923','¥6,278','¥2,778','¥203','¥6,075'],
  ['王小若','女','','','','','','¥1,950','¥513','¥3,863','¥363','¥18','¥3,844'],
  ['薛晶','女','','','','','','¥1,950','¥513','¥3,938','¥438','¥22','¥3,916'],
  ['于伟','男','','','','','','¥1,950','¥513','¥3,813','¥313','¥16','¥3,797'],
  ['张帆','女','','','','','','¥2,500','¥1,640','¥8,850','¥5,350','¥545','¥8,305'],
  ['张军','男','','','','','','¥1,950','¥410','¥3,373','¥0','¥0','¥3,373'],
  ['张珊珊','女','','','','','','¥1,950','¥615','¥4,145','¥645','¥32','¥4,113'],
  ['张瑛','女','','','','','','¥1,950','¥513','¥3,688','¥188','¥9','¥3,678'],
  ['赵军力','男','','','','','','¥1,950','¥718','¥4,499','¥999','¥50','¥4,449']
];
const titles = ['姓名','性别','职务','所属部门','基本工资','请假扣款','加班费','福利补贴','五险一金','应发工资','应税所得额','个人缴税','实发工资'];
const letters = 'ABCDEFGHIJKLMNOPQRST';
const filled = 13;

const style = {
  letterOn: "h-[19px] border-r border-[#b0b0b0] bg-[#d2d2d2] p-0 pt-[2px] font-['Liberation_Serif',serif] text-[15px] leading-[16px] font-normal text-[#217346]",
  letterOff: "h-[19px] border-r border-b border-[#c4c4c4] p-0 pt-[2px] font-['Liberation_Serif',serif] text-[15px] leading-[16px] font-normal text-[#333]",
  numOn: "h-[19px] border-r border-b border-[#c0c0c0] bg-[#dadada] p-0 pt-[4px] font-['Liberation_Serif',serif] text-base leading-[14px] font-normal text-[#217346]",
  numOff: "h-[19px] border-r border-[#c0c0c0] p-0 pt-[4px] font-['Liberation_Serif',serif] text-base leading-[14px] font-normal text-[#333]",
  first: "h-[19px] border-r border-b border-black bg-[#c6c6c6] p-0 pt-[3px] text-[17px] leading-[15px] font-bold",
  title: "h-[19px] border-r border-b border-black bg-[#969696] p-0 pt-[3px] text-[17px] leading-[15px] font-bold",
  text: "h-[19px] border-r border-b border-black bg-[#c6c6c6] p-0 pt-[4px] text-[13px] leading-[14px]",
  money: "h-[19px] border-r border-b border-black bg-[#adb4bd] p-0 pt-[6px] font-['Liberation_Mono',monospace] text-xs leading-[12px]",
  blank: "h-[19px] border-r border-b border-[#d0d0d0] bg-white p-0"
};

function cell(tag, cls, text) {
  const el = document.createElement(tag);
  el.className = cls;
  if (text) {
    const box = document.createElement('div');
    box.className = 'flex justify-center overflow-x-clip whitespace-nowrap';
    box.textContent = text;
    el.append(box);
  }
  return el;
}

[...letters].forEach((l, i) => {
  const col = document.createElement('col');
  col.className = 'w-[72px]';
  document.getElementById('cols').append(col);
  document.getElementById('letters').append(cell('th', i < filled ? style.letterOn : style.letterOff, i < 19 ? l : ''));
});

for (let r = 1; r <= 26; r++) {
  const tr = document.createElement('tr');
  tr.append(cell('th', r <= 25 ? style.numOn : style.numOff, String(r)));
  for (let c = 0; c < letters.length; c++) {
    if (r > 25 || c >= filled) tr.append(cell('td', style.blank, ''));
    else if (r === 1) tr.append(cell('td', c === 0 ? style.first : style.title, titles[c]));
    else tr.append(cell('td', c < 4 ? style.text : style.money, data[r - 2][c]));
  }
  document.getElementById('rows').append(tr);
}

const range = document.getElementById('range');
range.focus();
range.select();
</script>
</body>
</html>
